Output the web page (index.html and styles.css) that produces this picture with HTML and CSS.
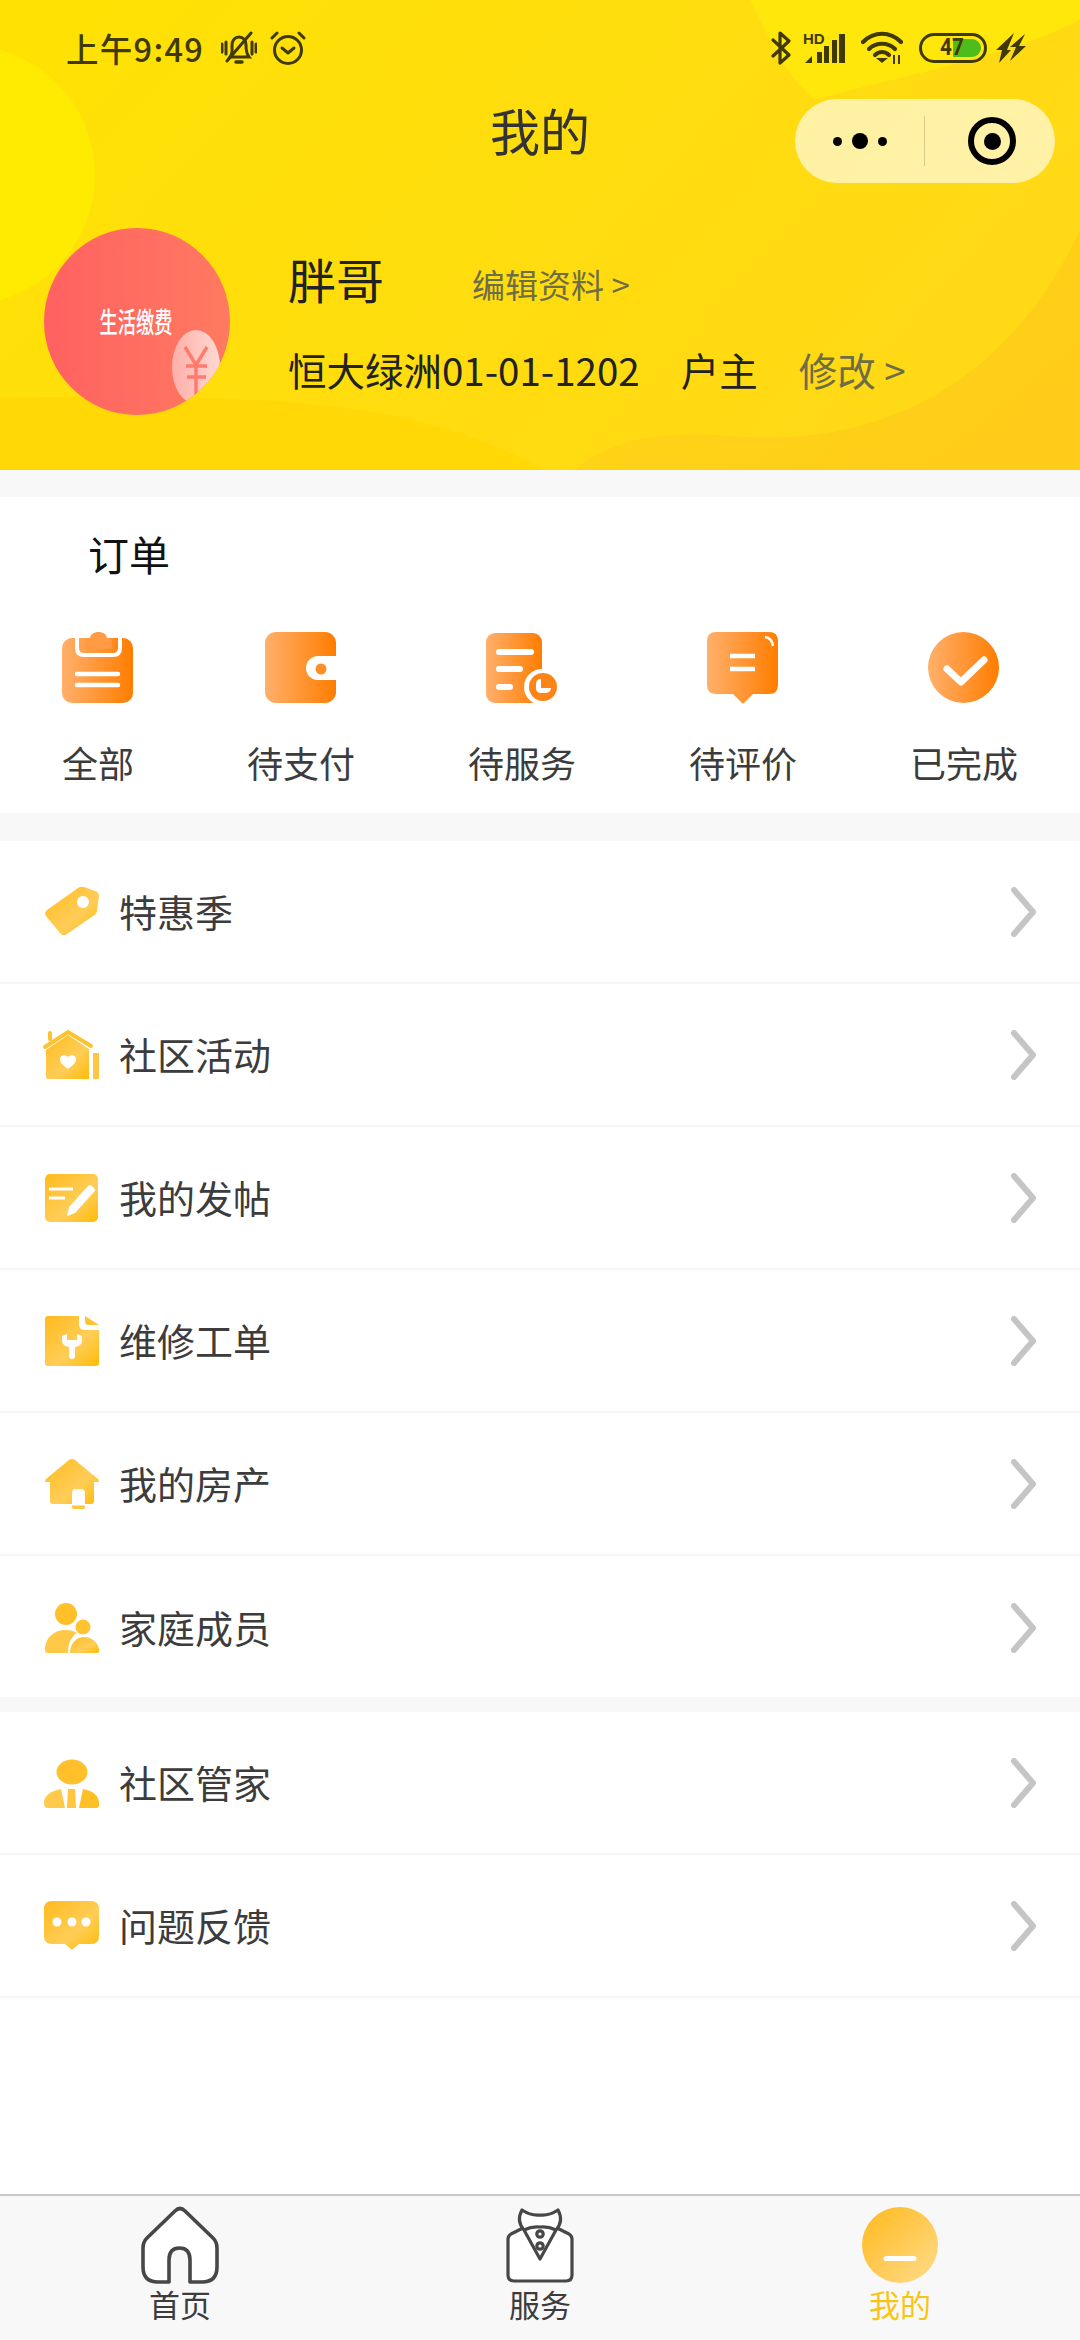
FILE: index.html
```html
<!DOCTYPE html>
<html lang="zh-CN">
<head>
<meta charset="utf-8">
<title>我的</title>
<link rel="stylesheet" href="styles.css">
</head>
<body>
<div class="app">
  <header class="hero">
    <svg class="hero-bg" viewBox="0 0 1080 470" preserveAspectRatio="none" aria-hidden="true">
      <defs>
        <linearGradient id="base" x1="0" y1="0" x2="1" y2="0.4">
          <stop offset="0" stop-color="#ffe203"/><stop offset="1" stop-color="#ffd916"/>
        </linearGradient>
        <linearGradient id="corner" x1="0" y1="0" x2="1" y2="0.6">
          <stop offset="0" stop-color="#ffd714"/><stop offset="1" stop-color="#ffcd19"/>
        </linearGradient>
        <linearGradient id="orange" x1="0" y1="0" x2="1" y2="0">
          <stop offset="0" stop-color="#ffb06c"/><stop offset="1" stop-color="#ff7d00"/>
        </linearGradient>
        <linearGradient id="gold" x1="0" y1="0" x2="1" y2="1">
          <stop offset="0" stop-color="#ffbb1d"/><stop offset="0.6" stop-color="#ffcd58"/><stop offset="1" stop-color="#ffbb05"/>
        </linearGradient>
        <linearGradient id="soft" x1="0" y1="0" x2="1" y2="1">
          <stop offset="0" stop-color="#ffb91c"/><stop offset="1" stop-color="#ffdc8c"/>
        </linearGradient>
        <linearGradient id="avatarFill" x1="0" y1="0" x2="1" y2="0">
          <stop offset="0" stop-color="#ff6161"/><stop offset="1" stop-color="#ff7a60"/>
        </linearGradient>
        <linearGradient id="pill" x1="0" y1="0" x2="1" y2="0">
          <stop offset="0" stop-color="#ffafa8"/><stop offset="1" stop-color="#ffd8d2"/>
        </linearGradient>
      </defs>
      <rect width="1080" height="470" fill="url(#base)"/>
      <circle cx="-35" cy="175" r="130" fill="#ffea02"/>
      <path d="M750 0 C775 50 790 80 815 100 C880 80 1000 60 1080 20 V0Z" fill="#ffe70c"/>
      <path d="M0 398 C120 395 250 395 360 410 C430 420 500 445 545 470 H0Z" fill="#ffd805"/>
      <path d="M575 470 C610 440 660 430 730 436 C860 448 1000 400 1080 230 V470Z" fill="url(#corner)"/>
    </svg>

    <div class="status">
      <div class="status-side">
        <span class="clock">上午9:49</span>
        <svg class="ic-bell" viewBox="0 0 36 34" aria-hidden="true"><g fill="none" stroke="#403a02" stroke-width="3" stroke-linecap="round"><path d="M9 26 C12 22 11 18 11 15 C11 9 14 6 18 6 C22 6 25 9 25 14 C25 18 25 22 28 26 Z"/><path d="M6 30 L30 2"/><path d="M1 13 V21 M5 11 V23 M31 11 V23 M35 13 V21"/><path d="M15 31 H21" stroke-width="3.5"/></g></svg>
        <svg class="ic-alarm" viewBox="0 0 36 36" aria-hidden="true"><g fill="none" stroke="#403a02" stroke-width="3" stroke-linecap="round" stroke-linejoin="round"><circle cx="18" cy="20" r="13.5"/><path d="M12 18 L18 23 L24 18"/><path d="M2 8 L7 3 M29 3 L34 8"/></g></svg>
      </div>
      <div class="status-side status-right">
        <svg class="ic-bt" viewBox="0 0 20 34" aria-hidden="true"><path d="M2 9 L18 24 L9 32 V2 L18 10 L2 25" fill="none" stroke="#403a02" stroke-width="3.2" stroke-linejoin="round" stroke-linecap="round"/></svg>
        <span class="signal">
          <span class="hd">HD</span>
          <svg viewBox="0 0 42 22" aria-hidden="true"><g fill="#403a02"><path d="M2 22 L9 15 V22Z"/><rect x="14" y="11" width="5" height="11"/><rect x="21" y="5" width="5" height="17"/><rect x="29" y="-1" width="5" height="23"/><rect x="36" y="-7" width="6" height="29"/></g></svg>
        </span>
        <svg class="ic-wifi" viewBox="0 0 42 34" aria-hidden="true"><g fill="none" stroke="#403a02" stroke-width="4.200" stroke-linecap="round"><path d="M2 11 C13 0 29 0 40 11"/><path d="M8 18 C15 11 27 11 34 18"/><path d="M14 24 C18 20 24 20 28 24"/></g><path d="M21 32 L15 27 H27Z" fill="#403a02"/><path d="M33 24 V33 M38 24 V33" stroke="#403a02" stroke-width="2"/></svg>
        <span class="battery"><span class="battery-level"></span><span class="battery-num">47</span></span>
        <svg class="ic-bolt" viewBox="0 0 30 30" aria-hidden="true"><path d="M18 0 L0 17 H6 L3 30 L15 17 H11Z M29 1 L14 14 H20 L14 28 L30 13 H23Z" fill="#403a02"/></svg>
      </div>
    </div>

    <div class="nav">
      <h1 class="nav-title">我的</h1>
      <div class="capsule">
        <span class="dots"><i class="dot"></i><i class="dot dot-big"></i><i class="dot"></i></span>
        <span class="capsule-line"></span>
        <span class="target"><i class="target-dot"></i></span>
      </div>
    </div>

    <div class="profile">
      <div class="avatar">
        <svg class="avatar-art" viewBox="0 0 186 187" aria-hidden="true">
          <rect width="186" height="187" fill="url(#avatarFill)"/>
          <ellipse cx="152" cy="139" rx="24" ry="37" fill="url(#pill)"/>
          <g fill="none" stroke="#ff7a6c" stroke-width="3.400">
            <path d="M141 119 L152 137 L163 119"/>
            <path d="M142 138 H163 M143 149 H162"/>
            <path d="M152 137 V175"/>
          </g>
        </svg>
        <span class="avatar-text">生活缴费</span>
      </div>
      <div class="profile-info">
        <div class="name-row"><span class="name">胖哥</span><span class="edit">编辑资料 &gt;</span></div>
        <div class="addr-row"><span class="addr">恒大绿洲01-01-1202</span><span class="role">户主</span><span class="change">修改 &gt;</span></div>
      </div>
    </div>
  </header>

  <section class="orders">
    <h2 class="orders-title">订单</h2>
    <div class="order-list">
      <div class="order">
        <svg class="order-ic" viewBox="0 0 72 72" aria-hidden="true"><rect x="0" y="6" width="71" height="65" rx="10" fill="url(#orange)"/><path d="M15 6 V16 Q15 23 22 23 H51 Q58 23 58 16 V6" fill="none" stroke="#fff" stroke-width="4"/><path d="M27 6 H28 C29 -2 44 -2 45 6 H46 Q50 6 50 10 V14 Q50 17 46 17 H27 Q23 17 23 14 V10 Q23 6 27 6Z" fill="#ff9a45"/><path d="M15 42 H56 M15 53 H56" stroke="#fff" stroke-width="4.500" stroke-linecap="round" fill="none"/></svg>
        <span class="order-label">全部</span>
      </div>
      <div class="order">
        <svg class="order-ic" viewBox="0 0 72 72" aria-hidden="true"><rect x="0" y="0" width="71" height="71" rx="11" fill="url(#orange)"/><path d="M71 24 H53 A12 12 0 0 0 53 48 H71Z" fill="#fff"/><circle cx="56" cy="37" r="5.500" fill="#ff8d26"/></svg>
        <span class="order-label">待支付</span>
      </div>
      <div class="order">
        <svg class="order-ic" viewBox="0 0 72 72" aria-hidden="true"><rect x="0" y="1" width="56" height="70" rx="9" fill="url(#orange)"/><path d="M13 20 H45 M13 37 H34 M13 55 H24" stroke="#fff" stroke-width="6" stroke-linecap="round" fill="none"/><circle cx="56" cy="55" r="18" fill="#fff"/><circle cx="57" cy="55" r="14" fill="#ff8418"/><path d="M55 47 V56 H65 A5 5 0 0 1 60 61 H55 Q50 61 50 56 V52 Q50 47 55 47Z" fill="#fff"/></svg>
        <span class="order-label">待服务</span>
      </div>
      <div class="order">
        <svg class="order-ic" viewBox="0 0 72 72" aria-hidden="true"><path d="M9 0 H62 Q71 0 71 9 V53 Q71 62 62 62 H46 L37 71 Q36 72 35 71 L26 62 H9 Q0 62 0 53 V9 Q0 0 9 0Z" fill="url(#orange)"/><path d="M23 24 H48 M23 37 H48" stroke="#fff" stroke-width="4.500" fill="none"/><path d="M58 5 Q65 6 66 14" stroke="#fff" stroke-width="2.500" fill="none"/></svg>
        <span class="order-label">待评价</span>
      </div>
      <div class="order">
        <svg class="order-ic" viewBox="0 0 72 72" aria-hidden="true"><circle cx="35.500" cy="35.500" r="35.500" fill="url(#orange)"/><path d="M19 37 L33 50 L56 28" stroke="#fff" stroke-width="7" stroke-linecap="round" stroke-linejoin="round" fill="none"/></svg>
        <span class="order-label">已完成</span>
      </div>
    </div>
  </section>

  <section class="group">
    <div class="row">
      <svg class="row-ic" viewBox="0 0 56 56" aria-hidden="true"><path fill-rule="evenodd" d="M3 27 L34 5 Q37 3 40 4 L51 8 Q55 9 55 13 L53 27 Q53 31 49 33 L23 51 Q19 54 16 50 L2 33 Q0 29 3 27Z M39 13 A6 6 0 1 0 39 25 A6 6 0 1 0 39 13Z" fill="url(#gold)"/></svg>
      <span class="row-label">特惠季</span>
      <svg class="chev" viewBox="0 0 26 50" aria-hidden="true"><path d="M3 3 L22 25 L3 47" fill="none" stroke="#c5c5c5" stroke-width="6" stroke-linecap="round" stroke-linejoin="round"/></svg>
    </div>
    <div class="row">
      <svg class="row-ic" viewBox="0 0 56 56" aria-hidden="true"><path fill-rule="evenodd" d="M2 24 L24 9 L45 23 V53 H4 Q2 53 2 51Z M24 43 C20 40 16 37 16 33 C16 29 21 28 24 31 C27 28 32 29 32 33 C32 37 28 40 24 43Z" fill="url(#gold)"/><path d="M1 21 L24 6 L47 20 M6 13 V7" fill="none" stroke="#ffc22f" stroke-width="4" stroke-linecap="round"/><path d="M49 27 H55 V53 H49Z" fill="#ffc543"/></svg>
      <span class="row-label">社区活动</span>
      <svg class="chev" viewBox="0 0 26 50" aria-hidden="true"><path d="M3 3 L22 25 L3 47" fill="none" stroke="#c5c5c5" stroke-width="6" stroke-linecap="round" stroke-linejoin="round"/></svg>
    </div>
    <div class="row">
      <svg class="row-ic" viewBox="0 0 56 56" aria-hidden="true"><rect x="1" y="5" width="53" height="48" rx="5" fill="url(#gold)"/><path d="M5 20 H29 M5 29 H21" stroke="#fff" stroke-width="3" fill="none"/><path d="M23 47 L25 38 L44 17 Q46 15 48 17 L50 19 Q52 21 50 23 L31 44Z" fill="#fff"/></svg>
      <span class="row-label">我的发帖</span>
      <svg class="chev" viewBox="0 0 26 50" aria-hidden="true"><path d="M3 3 L22 25 L3 47" fill="none" stroke="#c5c5c5" stroke-width="6" stroke-linecap="round" stroke-linejoin="round"/></svg>
    </div>
    <div class="row">
      <svg class="row-ic" viewBox="0 0 56 56" aria-hidden="true"><path d="M4 4 H35 V12 Q35 18 41 18 H55 V51 Q55 54 52 54 H4 Q1 54 1 51 V7 Q1 4 4 4Z" fill="url(#gold)"/><path d="M41 4 L55 13 H45 Q41 13 41 9Z" fill="#ffc232"/><path d="M18 24 V28 Q18 34 25 35 V44 A3 3 0 0 0 31 44 V35 Q38 34 38 28 V24 L33 22 V28 H23 V22Z" fill="#fff"/></svg>
      <span class="row-label">维修工单</span>
      <svg class="chev" viewBox="0 0 26 50" aria-hidden="true"><path d="M3 3 L22 25 L3 47" fill="none" stroke="#c5c5c5" stroke-width="6" stroke-linecap="round" stroke-linejoin="round"/></svg>
    </div>
    <div class="row">
      <svg class="row-ic" viewBox="0 0 56 56" aria-hidden="true"><path d="M25 5 Q28 3 31 5 L54 24 Q56 26 54 27 H50 V46 Q50 49 47 49 H41 V38 Q41 34 37 34 H32 Q28 34 28 38 V49 H9 Q6 49 6 46 V27 H2 Q0 26 2 24Z" fill="url(#gold)"/><path d="M28 50.500 H41 V52 Q41 54 39 54 H30 Q28 54 28 52Z" fill="#ffc53d"/></svg>
      <span class="row-label">我的房产</span>
      <svg class="chev" viewBox="0 0 26 50" aria-hidden="true"><path d="M3 3 L22 25 L3 47" fill="none" stroke="#c5c5c5" stroke-width="6" stroke-linecap="round" stroke-linejoin="round"/></svg>
    </div>
    <div class="row row-last">
      <svg class="row-ic" viewBox="0 0 56 56" aria-hidden="true"><circle cx="22" cy="15" r="11" fill="#ffc02a"/><circle cx="39" cy="28" r="7.500" fill="#ffc42f"/><path d="M1 51 C1 38 11 31 21 31 C26 31 30 32 33 34 C27 38 24 44 24 54 H4 Q1 54 1 51Z" fill="#ffc947"/><path d="M27 54 C25 54 26 51 27 48 C29 42 34 38 40 38 C47 38 53 42 55 50 Q56 54 53 54Z" fill="url(#gold)"/></svg>
      <span class="row-label">家庭成员</span>
      <svg class="chev" viewBox="0 0 26 50" aria-hidden="true"><path d="M3 3 L22 25 L3 47" fill="none" stroke="#c5c5c5" stroke-width="6" stroke-linecap="round" stroke-linejoin="round"/></svg>
    </div>
  </section>

  <section class="group group-second">
    <div class="row">
      <svg class="row-ic" viewBox="0 0 56 56" aria-hidden="true"><ellipse cx="28" cy="18" rx="15.500" ry="12.500" fill="#ffc02c"/><path d="M17 35 L21 54 H4 Q0 54 0 49 C0 42 6 37 17 35Z" fill="#ffc94a"/><path d="M39 35 L35 54 H52 Q56 54 55 49 C55 42 50 37 39 35Z" fill="#ffbf26"/><path d="M24 35 H31 L32 54 H23Z" fill="#ffc63e"/></svg>
      <span class="row-label">社区管家</span>
      <svg class="chev" viewBox="0 0 26 50" aria-hidden="true"><path d="M3 3 L22 25 L3 47" fill="none" stroke="#c5c5c5" stroke-width="6" stroke-linecap="round" stroke-linejoin="round"/></svg>
    </div>
    <div class="row">
      <svg class="row-ic" viewBox="0 0 56 56" aria-hidden="true"><path d="M8 4 H47 Q55 4 55 12 V39 Q55 47 47 47 H35 L28 53 L21 47 H8 Q0 47 0 39 V12 Q0 4 8 4Z" fill="url(#gold)"/><circle cx="13" cy="25" r="4.500" fill="#fff"/><circle cx="28" cy="25" r="4.500" fill="#fff"/><circle cx="42" cy="25" r="4.500" fill="#fff"/></svg>
      <span class="row-label">问题反馈</span>
      <svg class="chev" viewBox="0 0 26 50" aria-hidden="true"><path d="M3 3 L22 25 L3 47" fill="none" stroke="#c5c5c5" stroke-width="6" stroke-linecap="round" stroke-linejoin="round"/></svg>
    </div>
  </section>

  <div class="filler"></div>

  <nav class="tabs">
    <div class="tab">
      <svg class="tab-ic" viewBox="0 0 76 76" aria-hidden="true"><path d="M33 4 Q38 -1 43 4 L71 31 Q75 35 75 41 V60 Q75 75 60 75 H48 V53 Q48 41 37.500 41 Q27 41 27 53 V75 H16 Q1 75 1 60 V41 Q1 35 5 31Z" fill="#fff" stroke="#474747" stroke-width="3.600" stroke-linejoin="round"/></svg>
      <span class="tab-label">首页</span>
    </div>
    <div class="tab">
      <svg class="tab-ic" viewBox="0 0 76 76" aria-hidden="true"><g fill="none" stroke="#474747" stroke-width="3.200" stroke-linejoin="round"><path d="M21 21 L9 27 Q6 29 6 32 V68 Q6 74 12 74 H64 Q70 74 70 68 V32 Q70 29 67 27 L55 21" fill="#fff"/><path d="M20 3 Q14 14 22 23 L38 52 L54 23 Q62 14 56 3 Q47 9 38 8 Q29 9 20 3Z" fill="#fff"/><path d="M22 23 Q30 19 38 20 Q46 19 54 23"/><circle cx="38" cy="27" r="3.200"/><circle cx="38" cy="39" r="3.200"/></g></svg>
      <span class="tab-label">服务</span>
    </div>
    <div class="tab tab-active">
      <svg class="tab-ic" viewBox="0 0 76 76" aria-hidden="true"><circle cx="38" cy="38" r="38" fill="url(#soft)"/><path d="M24 51.500 H52" stroke="#fff" stroke-width="5" stroke-linecap="round"/></svg>
      <span class="tab-label">我的</span>
    </div>
  </nav>
</div>
</body>
</html>
```

FILE: styles.css
```css
* { box-sizing: border-box; }
html, body { margin: 0; padding: 0; }
body {
  background: #f8f8f8;
  font-family: "Noto Sans CJK SC", "Noto Sans", sans-serif;
  color: #333;
}
.app {
  width: 1080px;
  height: 2340px;
  display: flex;
  flex-direction: column;
  overflow: hidden;
  background: #f8f8f8;
}

/* header */
.hero {
  position: relative;
  height: 470px;
  flex: none;
  display: flex;
  flex-direction: column;
  overflow: hidden;
}
.hero-bg {
  position: absolute;
  left: 0;
  top: 0;
  width: 1080px;
  height: 470px;
}
.status, .nav, .profile { position: relative; }

.status {
  height: 96px;
  padding: 0 54px 0 66px;
  display: flex;
  justify-content: space-between;
  align-items: center;
  flex: none;
}
.status-side { display: flex; align-items: center; }
.clock {
  font-size: 32.500px;
  font-weight: 500;
  color: #403a02;
  line-height: 40px;
  width: 155px;
  letter-spacing: 1.300px;
  white-space: nowrap;
}
.ic-bell { width: 36px; height: 34px; }
.ic-alarm { width: 36px; height: 36px; margin-left: 13px; }
.ic-bt { width: 20px; height: 34px; }
.signal {
  position: relative;
  display: block;
  width: 42px;
  height: 30px;
  margin-left: 12px;
  margin-top: 0;
}
.signal svg { position: absolute; left: 0; bottom: 0; width: 42px; height: 22px; overflow: visible; }
.hd {
  position: absolute;
  left: 0;
  top: -2px;
  font: 700 15px/16px "Liberation Sans", sans-serif;
  color: #403a02;
}
.ic-wifi { width: 42px; height: 34px; margin-left: 16px; }
.battery {
  position: relative;
  display: block;
  width: 68px;
  height: 30px;
  margin-left: 16px;
  border: 3px solid #403a02;
  border-radius: 15px;
  overflow: hidden;
}
.battery-level {
  position: absolute;
  left: 31px;
  top: 3px;
  bottom: 3px;
  right: 3px;
  background: #4dbd1c;
  border-radius: 0 10px 10px 0;
}
.battery-num {
  position: absolute;
  left: 18px;
  top: 0;
  font: 700 23px/24px "Roboto", sans-serif;
  color: #403a02;
  transform: scaleX(.9);
  transform-origin: left center;
}
.ic-bolt { width: 30px; height: 30px; margin-left: 9px; }

.nav {
  height: 84px;
  margin-top: 3px;
  flex: none;
  display: flex;
  justify-content: center;
  align-items: center;
}
.nav-title {
  margin: 0;
  font-size: 50px;
  font-weight: 400;
  line-height: 68px;
  color: #333;
  position: relative;
  top: -12px;
}
.capsule {
  position: absolute;
  right: 25px;
  top: 0;
  width: 260px;
  height: 84px;
  border-radius: 42px;
  background: rgba(255, 255, 255, .62);
  display: flex;
  align-items: center;
}
.dots {
  width: 129px;
  display: flex;
  justify-content: center;
  align-items: center;
  gap: 10px;
}
.dot { width: 9px; height: 9px; border-radius: 50%; background: #000; }
.dot-big { width: 16px; height: 16px; }
.capsule-line { width: 1px; height: 50px; background: rgba(0, 0, 0, .16); }
.target {
  width: 48px;
  height: 48px;
  margin-left: 43px;
  border: 6px solid #000;
  border-radius: 50%;
  display: flex;
  align-items: center;
  justify-content: center;
}
.target-dot { width: 17px; height: 17px; border-radius: 50%; background: #000; }

.profile {
  margin-top: 45px;
  padding-left: 44px;
  display: flex;
  align-items: flex-start;
}
.avatar {
  position: relative;
  width: 186px;
  height: 187px;
  flex: none;
  display: flex;
  align-items: center;
  justify-content: center;
  border-radius: 50%;
  overflow: hidden;
}
.avatar-art { position: absolute; inset: 0; width: 186px; height: 187px; }
.avatar-text {
  position: relative;
  top: -1px;
  left: -1px;
  font-size: 28px;
  font-weight: 500;
  line-height: 32px;
  color: #fff;
  white-space: nowrap;
  transform: scaleX(.65);
}
.profile-info {
  margin-left: 58px;
  padding-top: 16px;
  display: flex;
  flex-direction: column;
  gap: 30px;
}
.name-row, .addr-row { display: flex; align-items: center; white-space: nowrap; }
.name { font-size: 48px; line-height: 68px; color: #222; }
.edit { font-size: 33px; line-height: 48px; color: #6f6d45; margin-left: 88px; margin-top: 12px; }
.addr { font-size: 38.500px; line-height: 54px; color: #222; }
.role { font-size: 38.500px; line-height: 54px; color: #222; margin-left: 41px; }
.change { font-size: 38.500px; line-height: 54px; color: #6f6d45; margin-left: 41px; }

/* orders */
.orders {
  margin-top: 27px;
  height: 316px;
  flex: none;
  background: #fff;
  display: flex;
  flex-direction: column;
}
.orders-title {
  margin: 0;
  padding: 28px 0 0 88px;
  font-size: 41px;
  font-weight: 400;
  line-height: 56px;
  color: #111;
}
.order-list {
  margin-top: 51px;
  padding: 0 62px;
  display: flex;
  justify-content: space-between;
}
.order { display: flex; flex-direction: column; align-items: center; }
.order-ic { width: 72px; height: 72px; display: block; overflow: visible; }
.order-label {
  margin-top: 33px;
  font-size: 36px;
  line-height: 50px;
  color: #3c3c3c;
  white-space: nowrap;
}

/* lists */
.group { margin-top: 28px; flex: none; background: #fff; }
.group-second { margin-top: 15px; }
.row {
  height: 143px;
  padding: 0 43px 2px 44px;
  display: flex;
  align-items: center;
  border-bottom: 2px solid #f6f6f6;
}
.row-last { height: 141px; border-bottom: 0; padding-bottom: 0; }
.row-ic { width: 56px; height: 56px; flex: none; display: block; overflow: visible; }
.row-label {
  margin-left: 19px;
  flex: 1;
  font-size: 38px;
  line-height: 54px;
  color: #3c3c3c;
}
.chev { width: 26px; height: 50px; flex: none; margin-top: 2px; }

.filler { flex: 1; background: #fff; }

/* tabs */
.tabs {
  height: 146px;
  flex: none;
  display: grid;
  grid-template-columns: repeat(3, 1fr);
  background: #f8f8f8;
  border-top: 2px solid #c8c8c8;
}
.tab {
  padding-top: 11px;
  display: flex;
  flex-direction: column;
  align-items: center;
}
.tab-ic { width: 76px; height: 76px; display: block; overflow: visible; }
.tab-label {
  font-size: 31px;
  line-height: 44px;
  color: #3c3c3c;
  margin-top: -1px;
}
.tab-active .tab-label { color: #f8c516; }
```
